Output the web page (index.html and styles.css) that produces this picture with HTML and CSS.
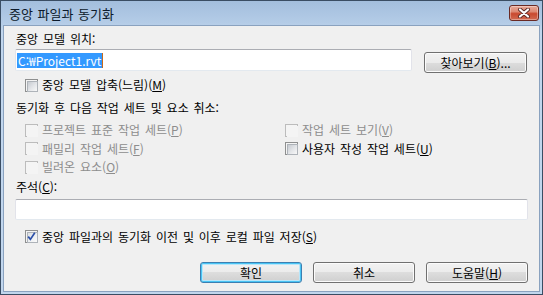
FILE: index.html
```html
<!DOCTYPE html>
<html lang="ko">
<head>
<meta charset="utf-8">
<title>중앙 파일과 동기화</title>
<link rel="stylesheet" href="styles.css">
</head>
<body>
<div class="window">
  <div class="titlebar">
    <span class="title">중앙 파일과 동기화</span>
    <div class="close">
      <svg width="14" height="10" viewBox="0 0 14 10">
        <path d="M3 1.5 L11 8.5 M11 1.5 L3 8.5" stroke="#5a2a26" stroke-width="4" stroke-linecap="round"/>
        <path d="M3 1.5 L11 8.5 M11 1.5 L3 8.5" stroke="#ffffff" stroke-width="2.2" stroke-linecap="round"/>
      </svg>
    </div>
  </div>
  <div class="client">
    <div class="label first">중앙 모델 위치:</div>
    <div class="path-row">
      <div class="textbox"><span class="sel">C:₩Project1.rvt</span></div>
      <div class="btn browse">찾아보기(<u>B</u>)...</div>
    </div>
    <div class="check compress"><span class="cb"></span><span>중앙 모델 압축(느림)(<u>M</u>)</span></div>
    <div class="label section">동기화 후 다음 작업 세트 및 요소 취소:</div>
    <div class="options">
      <div class="check disabled"><span class="cb"></span><span>프로젝트 표준 작업 세트(<u>P</u>)</span></div>
      <div class="check disabled"><span class="cb"></span><span>작업 세트 보기(<u>V</u>)</span></div>
      <div class="check disabled"><span class="cb"></span><span>패밀리 작업 세트(<u>F</u>)</span></div>
      <div class="check"><span class="cb"></span><span>사용자 작성 작업 세트(<u>U</u>)</span></div>
      <div class="check disabled"><span class="cb"></span><span>빌려온 요소(<u>O</u>)</span></div>
    </div>
    <div class="label comment-label">주석(<u>C</u>):</div>
    <div class="textbox comment"></div>
    <div class="check save"><span class="cb checked"><svg width="9" height="9" viewBox="0 0 9 9"><path d="M1.2 4.6 L3.4 7.4 L7.8 0.8" fill="none" stroke="#2b4fa8" stroke-width="1.7"/></svg></span><span>중앙 파일과의 동기화 이전 및 이후 로컬 파일 저장(<u>S</u>)</span></div>
    <div class="actions">
      <div class="btn default">확인</div>
      <div class="btn">취소</div>
      <div class="btn">도움말(<u>H</u>)</div>
    </div>
  </div>
</div>
</body>
</html>
```
FILE: styles.css
```css
* { box-sizing: border-box; }
html, body { margin: 0; padding: 0; }
body {
  width: 543px;
  height: 295px;
  overflow: hidden;
  font-family: "Noto Sans CJK KR", "Noto Sans", sans-serif;
  font-size: 12px;
  word-spacing: 1.5px;
  color: #000;
}
.window {
  width: 543px;
  height: 295px;
  border: 1px solid #3a4d63;
  background: linear-gradient(to bottom, #a3bedd 0px, #b4cce7 22px, #c1d6ed 30px, #c1d6ed 100%);
  padding: 0 2px 2px 2px;
  display: flex;
  flex-direction: column;
}
.titlebar {
  height: 24px;
  display: flex;
  align-items: flex-start;
  justify-content: space-between;
  padding-left: 6px;
}
.title {
  font-size: 13px;
  line-height: 14px;
  margin-top: 6px;
  word-spacing: 1px;
  color: #0c1a2b;
}
.close {
  width: 30px;
  height: 16px;
  margin-top: 4px;
  margin-right: 1px;
  border: 1px solid #6a2a24;
  border-radius: 3px;
  background: linear-gradient(to bottom, #e9a999 0%, #dd8a74 40%, #c9492f 55%, #d16b52 100%);
  box-shadow: inset 0 0 0 1px rgba(255,255,255,0.35);
  display: flex;
  align-items: center;
  justify-content: center;
}
.client {
  flex: 1;
  background: #f0f0f0;
  border: 1px solid #8aa2bf;
  padding: 6px 11px 0 11px;
  display: flex;
  flex-direction: column;
}
.label {
  height: 14px;
  line-height: 14px;
  padding-left: 1px;
}
.section { margin-top: 7px; }
.comment-label { margin-top: 3px; }
.path-row {
  margin-top: 3px;
  display: flex;
  align-items: flex-start;
  gap: 12px;
}
.textbox {
  background: #fff;
  border: 1px solid #e2e3ea;
  border-top-color: #abadb3;
  border-bottom-color: #e3e9ef;
  border-radius: 2px;
  height: 22px;
  padding: 2px 1px;
}
.path-row .textbox { width: 397px; }
.sel {
  display: inline-block;
  background: #3399ff;
  color: #fff;
  line-height: 15px;
  height: 15px;
  padding: 0 1px 0 1px;
  word-spacing: 0;
  border-right: 1px solid #c86a1a;
}
.btn {
  width: 102px;
  height: 21px;
  border: 1px solid #707070;
  border-radius: 3px;
  background: linear-gradient(to bottom, #f2f2f2 0%, #ebebeb 50%, #dddddd 50%, #cfcfcf 100%);
  box-shadow: inset 0 0 0 1px #fbfbfb;
  text-align: center;
  line-height: 19px;
}
.browse { width: 103px; margin-top: 3px; }
.btn.default {
  border-color: #3c7fb1;
  box-shadow: inset 0 0 0 1px #48c4f4, inset 0 0 0 2px #b8e6fa;
}
.check {
  display: flex;
  align-items: center;
  gap: 4px;
  height: 18px;
  line-height: 14px;
  padding-left: 10px;
}
.compress { margin-top: 3px; }
.save { margin-top: 8px; }
.cb {
  width: 13px;
  height: 13px;
  flex: none;
  border: 1px solid #8e8f8f;
  background: #f4f4f4;
  padding: 1px;
  position: relative;
}
.cb::before {
  content: "";
  display: block;
  width: 9px;
  height: 9px;
  border: 1px solid #aeb3b9;
  background: linear-gradient(135deg, #c6cad0 0%, #e4e6e9 55%, #f8f8f8 100%);
}
.cb svg {
  position: absolute;
  left: 1px;
  top: 1px;
}
.cb.checked::before {
  background: linear-gradient(135deg, #dcdfe4 0%, #eef0f2 55%, #fbfbfb 100%);
}
.disabled { color: #8d8d8d; }
.disabled .cb { border-color: #bcbcbc; background: #f4f4f4; }
.disabled .cb::before { border-color: #f4f4f4; background: #f4f4f4; }
.options {
  margin-top: 6px;
  display: grid;
  grid-template-columns: 260px 1fr;
  grid-auto-rows: 18.5px;
}
.options .check { padding-left: 10px; }
.textbox.comment { margin-top: 5px; height: 21px; }
.actions {
  margin-top: 16px;
  display: flex;
  justify-content: flex-end;
  gap: 11px;
}
```
